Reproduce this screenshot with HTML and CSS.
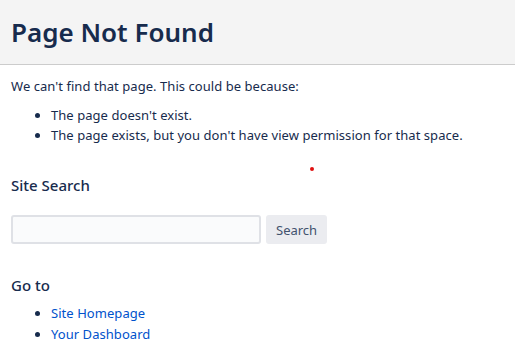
FILE: index.html
```html
<!DOCTYPE html>
<html>
<head>
<meta charset="utf-8">
<link rel="stylesheet" href="styles.css">
</head>
<body>
<header class="page-header">
  <h1 class="title">Page Not Found</h1>
</header>
<main class="content">
  <p class="intro">We can't find that page. This could be because:</p>
  <ul class="reasons">
    <li>The page doesn't exist.</li>
    <li>The page exists, but you don't have view permission for that space.</li>
  </ul>
  <div class="dot-row"><span class="dot"></span></div>
  <h2 class="section-title">Site Search</h2>
  <form class="search">
    <input class="search-input" type="text">
    <button class="search-btn" type="button">Search</button>
  </form>
  <h2 class="section-title goto">Go to</h2>
  <ul class="links">
    <li><a href="#">Site Homepage</a></li>
    <li><a href="#">Your Dashboard</a></li>
  </ul>
</main>
</body>
</html>
```
FILE: styles.css
```css
html, body {
  margin: 0;
  padding: 0;
  background: #fff;
}
body {
  font-family: "Noto Sans", "Open Sans", sans-serif;
  font-size: 13px;
  color: #172b4d;
}
.page-header {
  background: #f4f4f4;
  border-bottom: 1px solid #ccc;
  height: 65px;
  box-sizing: border-box;
  padding: 0 11px;
  display: flex;
  align-items: center;
}
.title {
  margin: 0;
  font-size: 26px;
  font-weight: 600;
  color: #172b4d;
}
.content {
  padding: 0 11px;
}
.intro {
  margin: 11px 0 0;
  line-height: 20px;
  letter-spacing: 0.05px;
}
.reasons, .links {
  margin: 9px 0 0;
  padding-left: 40px;
  line-height: 20px;
  letter-spacing: 0.05px;
}
.links {
  line-height: 21px;
  margin-top: 8px;
}
.dot-row {
  position: relative;
  height: 0;
}
.dot {
  position: absolute;
  left: 299px;
  top: 22px;
  width: 4px;
  height: 4px;
  border-radius: 50%;
  background: #e01010;
}
.section-title {
  margin: 30px 0 0;
  font-size: 15px;
  font-weight: 500;
  line-height: 20px;
  color: #172b4d;
}
.search {
  margin: 20px 0 0;
  display: flex;
  gap: 5px;
}
.search-input {
  width: 250px;
  height: 29px;
  box-sizing: border-box;
  border: 2px solid #dfe1e6;
  border-radius: 3px;
  background: #fafbfc;
  margin: 0;
}
.search-btn {
  height: 29px;
  padding: 0 10px;
  border: none;
  border-radius: 3px;
  background: #ebecf0;
  font-family: inherit;
  font-size: 13px;
  color: #42526e;
}
.goto {
  margin-top: 31px;
}
.links a {
  color: #0052cc;
  text-decoration: none;
}
```
